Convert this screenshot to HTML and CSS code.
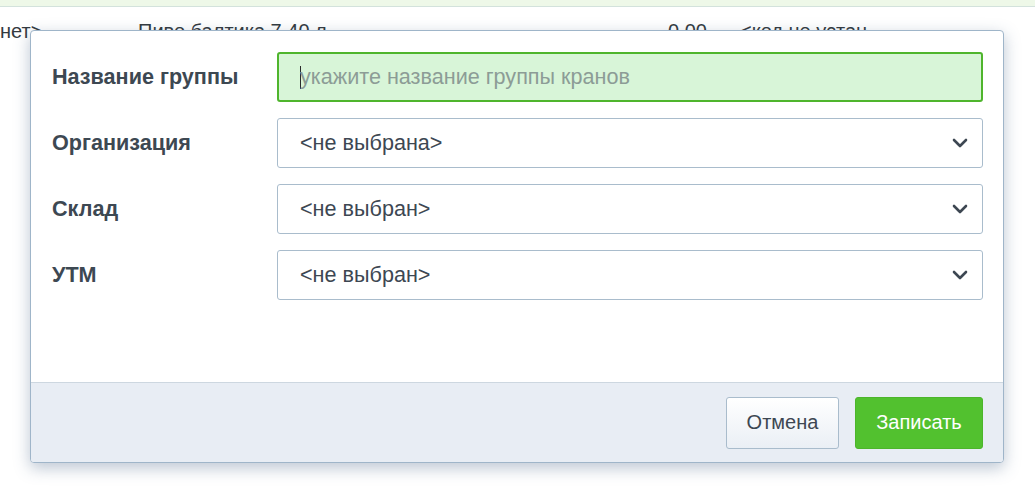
FILE: index.html
```html
<!DOCTYPE html>
<html lang="ru">
<head>
<meta charset="utf-8">
<title>Группа кранов</title>
<link rel="stylesheet" href="styles.css">
</head>
<body>
<div class="topbar"></div>
<div class="bg-row">
  <span class="c1">нет&gt;</span>
  <span class="c2">Пиво балтика 7 40 л</span>
  <span class="c3">0.00</span>
  <span class="c4">&lt;код не установлен&gt;</span>
</div>

<div class="modal">
  <div class="modal-body">
    <label class="lbl">Название группы</label>
    <div class="field field-active"><span class="caret"></span><span class="placeholder">укажите название группы кранов</span></div>

    <label class="lbl">Организация</label>
    <div class="field field-select"><span class="value">&lt;не выбрана&gt;</span>
      <svg class="chev" width="16" height="10" viewBox="0 0 16 10"><path d="M2 2 L8 8 L14 2" fill="none" stroke="#3d4752" stroke-width="2.6" stroke-linecap="round" stroke-linejoin="round"/></svg>
    </div>

    <label class="lbl">Склад</label>
    <div class="field field-select"><span class="value">&lt;не выбран&gt;</span>
      <svg class="chev" width="16" height="10" viewBox="0 0 16 10"><path d="M2 2 L8 8 L14 2" fill="none" stroke="#3d4752" stroke-width="2.6" stroke-linecap="round" stroke-linejoin="round"/></svg>
    </div>

    <label class="lbl">УТМ</label>
    <div class="field field-select"><span class="value">&lt;не выбран&gt;</span>
      <svg class="chev" width="16" height="10" viewBox="0 0 16 10"><path d="M2 2 L8 8 L14 2" fill="none" stroke="#3d4752" stroke-width="2.6" stroke-linecap="round" stroke-linejoin="round"/></svg>
    </div>
  </div>
  <div class="modal-footer">
    <button class="btn btn-cancel">Отмена</button>
    <button class="btn btn-save">Записать</button>
  </div>
</div>
</body>
</html>
```

FILE: styles.css
```css
html, body {
  margin: 0;
  padding: 0;
  background: #ffffff;
  font-family: "Liberation Sans", Arial, sans-serif;
  width: 1035px;
  height: 494px;
  overflow: hidden;
  position: relative;
}

.topbar {
  height: 6px;
  background: #eef8e8;
  border-bottom: 1px solid #d3e2dc;
}

.bg-row {
  display: flex;
  align-items: baseline;
  padding-top: 13px;
  font-size: 20px;
  color: #333a40;
  white-space: nowrap;
}
.bg-row .c1 { width: 138px; }
.bg-row .c2 { width: 530px; }
.bg-row .c3 { width: 72px; }
.bg-row .c4 { width: 128px; overflow: hidden; }

.modal {
  position: absolute;
  left: 30px;
  top: 30px;
  width: 972px;
  height: 431px;
  background: #ffffff;
  border: 1px solid #9fb5c9;
  border-radius: 4px;
  box-shadow: 0 5px 16px rgba(60, 90, 125, 0.35);
  display: flex;
  flex-direction: column;
  overflow: hidden;
}

.modal-body {
  flex: 1;
  display: grid;
  grid-template-columns: 225px 1fr;
  grid-auto-rows: 50px;
  row-gap: 16px;
  align-items: center;
  padding: 21px 20px 0 21px;
}

.lbl {
  font-size: 21.6px;
  font-weight: bold;
  color: #3d4852;
}

.field {
  height: 50px;
  box-sizing: border-box;
  border: 1px solid #a9bccc;
  border-radius: 3px;
  display: flex;
  align-items: center;
  padding: 0 14px 0 22px;
  font-size: 21.6px;
  color: #3d4752;
}

.field-active {
  border: 2px solid #4fb52d;
  background: #d8f5d8;
  padding-left: 21px;
}
.caret {
  display: inline-block;
  width: 1px;
  height: 23px;
  background: #2b2b2b;
  margin-right: -1px;
}
.placeholder {
  color: #8c9c96;
}

.field-select {
  justify-content: space-between;
}
.chev {
  display: block;
}

.modal-footer {
  height: 80px;
  box-sizing: border-box;
  background: #e8edf4;
  border-top: 1px solid #cdd7e0;
  display: flex;
  justify-content: flex-end;
  align-items: center;
  gap: 16px;
  padding: 0 20px;
}

.btn {
  height: 52px;
  border-radius: 3px;
  font-family: "Liberation Sans", Arial, sans-serif;
  font-size: 20px;
  padding: 0;
  cursor: pointer;
}
.btn-cancel {
  width: 113px;
  background: linear-gradient(#ffffff, #eaeff5);
  border: 1px solid #a9bccc;
  color: #3d4752;
}
.btn-save {
  width: 128px;
  background: #52c12f;
  border: 1px solid #4cb52b;
  color: #ffffff;
}
```
